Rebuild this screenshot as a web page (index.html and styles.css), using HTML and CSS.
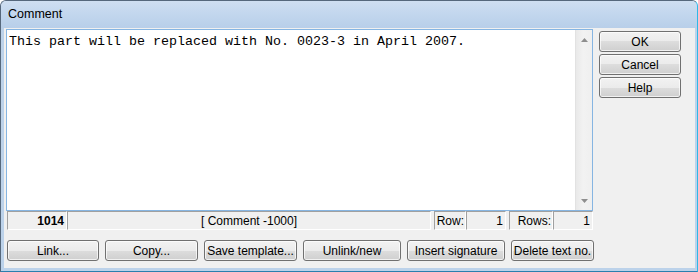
FILE: index.html
```html
<!DOCTYPE html>
<html>
<head>
<meta charset="utf-8">
<title>Comment</title>
<link rel="stylesheet" href="styles.css">
</head>
<body>
<div class="window">
  <div class="titlebar">Comment</div>
  <div class="frame">
    <div class="client">
      <div class="top">
        <div class="main">
          <div class="editor">
            <div class="text">This part will be replaced with No. 0023-3 in April 2007.</div>
            <div class="scrollbar">
              <svg class="arrow" width="7" height="4" viewBox="0 0 7 4"><path d="M3.5 0 L7 4 L0 4 Z" fill="#8e8e8e"/></svg>
              <svg class="arrow" width="7" height="4" viewBox="0 0 7 4"><path d="M0 0 L7 0 L3.5 4 Z" fill="#8e8e8e"/></svg>
            </div>
          </div>
          <div class="status">
            <div class="cell cell-id">1014</div>
            <div class="cell cell-name">[ Comment -1000]</div>
            <div class="cell cell-label cell-row">Row:</div>
            <div class="cell cell-val">1</div>
            <div class="cell cell-label cell-rows">Rows:</div>
            <div class="cell cell-val">1</div>
          </div>
        </div>
        <div class="side">
          <button class="btn side-btn">OK</button>
          <button class="btn side-btn">Cancel</button>
          <button class="btn side-btn">Help</button>
        </div>
      </div>
      <div class="actions">
        <button class="btn w92">Link...</button>
        <button class="btn w93">Copy...</button>
        <button class="btn w93">Save template...</button>
        <button class="btn w98">Unlink/new</button>
        <button class="btn w98">Insert signature</button>
        <button class="btn w83">Delete text no.</button>
      </div>
    </div>
  </div>
</div>
</body>
</html>
```

FILE: styles.css
```css
html, body {
  margin: 0;
  padding: 0;
  background: #ffffff;
}

.window {
  width: 698px;
  height: 272px;
  box-sizing: border-box;
  border: 1px solid #56687c;
  border-right-color: #2fb8e8;
  border-bottom-color: #2a7fae;
  border-radius: 6px 6px 0 0;
  background: #bcd2ea;
  display: flex;
  flex-direction: column;
  overflow: hidden;
  font-family: "Liberation Sans", Arial, sans-serif;
  font-size: 12px;
  color: #000;
  box-shadow: inset -1px -2px 0 #3cc3ee;
}

.titlebar {
  height: 27px;
  flex: none;
  box-sizing: border-box;
  padding-left: 7px;
  padding-bottom: 1px;
  display: flex;
  align-items: center;
  font-size: 12.5px;
  background: linear-gradient(to bottom, #cfdff1 0%, #c3d7ee 45%, #b8cfe9 100%);
  color: #000;
}

.frame {
  flex: 1;
  display: flex;
  padding: 0 2px 3px 3px;
  background: #bcd2ea;
}

.client {
  flex: 1;
  background: #f0f0f0;
  display: flex;
  flex-direction: column;
  padding-top: 1px;
}

.top {
  display: flex;
  padding-left: 2px;
}

.main {
  width: 587px;
  display: flex;
  flex-direction: column;
}

.editor {
  height: 182px;
  box-sizing: border-box;
  border: 1px solid #86b5e2;
  background: #fff;
  display: flex;
}

.text {
  flex: 1;
  padding: 4px 2px 0 2px;
  font-family: "Liberation Mono", "Courier New", monospace;
  font-size: 13.333px;
  line-height: 15px;
  color: #000;
  white-space: pre;
}

.scrollbar {
  width: 17px;
  flex: none;
  box-sizing: border-box;
  border-left: 1px solid #e2e2e2;
  background: linear-gradient(to right, #e9e9e9 0%, #f2f2f2 45%, #efefef 100%);
  display: flex;
  flex-direction: column;
  justify-content: space-between;
  align-items: center;
  padding: 8px 0 7px 0;
}

.arrow {
  display: block;
}

.status {
  display: flex;
  height: 19px;
  margin-left: 1px;
}

.cell {
  box-sizing: border-box;
  height: 19px;
  border-top: 1px solid #a0a0a0;
  border-left: 1px solid #a0a0a0;
  border-right: 1px solid #ffffff;
  border-bottom: 1px solid #ffffff;
  display: flex;
  align-items: center;
  font-size: 12px;
  white-space: nowrap;
}

.cell-id {
  width: 60px;
  justify-content: flex-end;
  padding-right: 2px;
  font-weight: bold;
}

.cell-name {
  width: 364px;
  justify-content: center;
}

.cell-label {
  justify-content: flex-end;
  padding-right: 1px;
}

.cell-row {
  width: 32px;
  margin-left: 3px;
}

.cell-rows {
  width: 44px;
  margin-left: 3px;
}

.cell-val {
  width: 40px;
  justify-content: flex-end;
  padding-right: 2px;
}

.side {
  margin-left: 6px;
  display: flex;
  flex-direction: column;
  gap: 2px;
  padding-top: 2px;
}

.btn {
  box-sizing: border-box;
  height: 21px;
  margin: 0;
  padding: 0;
  border: 1px solid #707070;
  border-radius: 3px;
  background: linear-gradient(to bottom, #f2f2f2 0%, #ebebeb 50%, #dddddd 50%, #cfcfcf 100%);
  box-shadow: inset 0 0 0 1px rgba(255, 255, 255, 0.7);
  font-family: "Liberation Sans", Arial, sans-serif;
  font-size: 12px;
  color: #000;
  white-space: nowrap;
}

.side-btn {
  width: 82px;
}

.actions {
  display: flex;
  gap: 6px;
  padding-left: 3px;
  margin-top: 10px;
}

.w92 { width: 92px; }
.w93 { width: 93px; }
.w98 { width: 98px; }
.w83 { width: 83px; }
```
